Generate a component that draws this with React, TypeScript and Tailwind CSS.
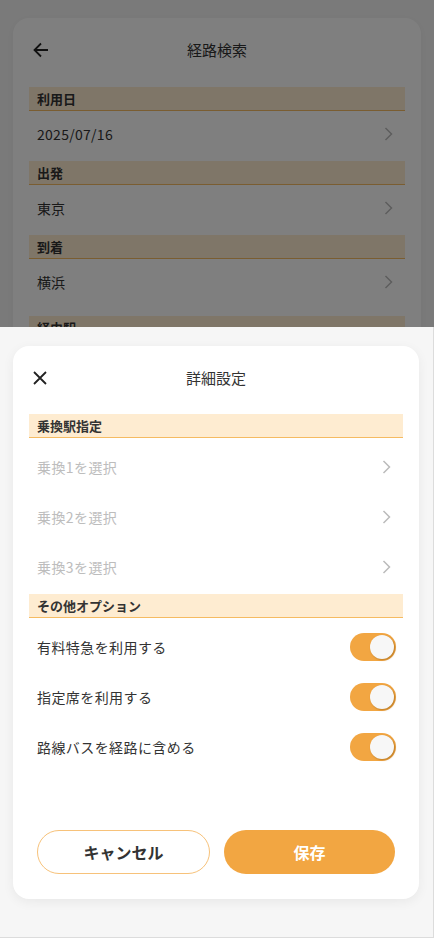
import React from "react";

const font = "font-['Noto_Sans_CJK_JP','Noto_Sans',sans-serif]";

function Chevron({ color = "#bbbbbb" }: { color?: string }) {
  return (
    <svg width="9" height="14" viewBox="0 0 9 14" fill="none">
      <path d="M1.5 1 L7.5 7 L1.5 13" stroke={color} strokeWidth="1.5" />
    </svg>
  );
}

function SectionBar({ label, className = "" }: { label: string; className?: string }) {
  return (
    <div
      className={`h-[24px] bg-[#feecd1] border-b border-[#f5bb62] px-2 flex items-center text-[13px] font-bold text-[#333] ${className}`}
    >
      {label}
    </div>
  );
}

function SelectRow({ text, placeholder }: { text: string; placeholder?: boolean }) {
  return (
    <div className="h-[50px] flex items-center justify-between pl-2 pr-3">
      <span className={`text-[14px] tracking-[0.03em] ${placeholder ? "text-[#bdbdbd]" : "text-[#333]"}`}>
        {text}
      </span>
      <Chevron />
    </div>
  );
}

function ToggleRow({ text }: { text: string }) {
  return (
    <div className="h-[50px] flex items-center justify-between pl-2 pr-[7px]">
      <span className="text-[14px] tracking-[0.03em] text-[#333]">{text}</span>
      <div className="relative w-[46px] h-[28px] rounded-full bg-[#f2a642]">
        <div className="absolute right-[2px] top-[2px] w-6 h-6 rounded-full bg-[#f7f7f7] shadow-[1px_1px_2px_rgba(120,70,0,0.45)]" />
      </div>
    </div>
  );
}

export default function App() {
  return (
    <div className={`relative w-[434px] h-[938px] overflow-hidden bg-[#f5f5f5] ${font}`}>
      {/* page underneath */}
      <div className="px-[13px] pt-[18px]">
        <div className="bg-white rounded-2xl px-4 h-[900px] shadow-[0_2px_10px_rgba(0,0,0,0.05)]">
          <div className="h-16 grid grid-cols-[40px_1fr_40px] items-center">
            <div className="pl-1">
              <svg width="16" height="16" viewBox="0 0 16 16" fill="none">
                <path d="M15 8 H1.5 M8 1.5 L1.5 8 L8 14.5" stroke="#222" strokeWidth="1.8" />
              </svg>
            </div>
            <div className="text-center text-[15px] text-[#333]">経路検索</div>
            <div />
          </div>
          <SectionBar label="利用日" className="mt-[5px]" />
          <div className="h-[46px] mb-1 flex items-center justify-between pl-2 pr-3">
            <span className="text-[14px] tracking-[0.02em] text-[#333]">2025/07/16</span>
            <Chevron />
          </div>
          <SectionBar label="出発" />
          <div className="h-[46px] mb-1 flex items-center justify-between pl-2 pr-3">
            <span className="text-[14px] text-[#333]">東京</span>
            <Chevron />
          </div>
          <SectionBar label="到着" />
          <div className="h-[46px] mb-1 flex items-center justify-between pl-2 pr-3">
            <span className="text-[14px] text-[#333]">横浜</span>
            <Chevron />
          </div>
          <SectionBar label="経由駅" className="mt-[11px]" />
        </div>
      </div>

      <div className="absolute inset-0 bg-black/50" />

      {/* bottom sheet */}
      <div className="absolute left-0 right-0 bottom-0 top-[327px] bg-[#f6f6f6] border-r border-b border-[#dcdcdc] pl-[13px] pr-[14px] pt-[19px]">
        <div className="h-[553px] bg-white rounded-2xl px-4 flex flex-col shadow-[0_3px_12px_rgba(0,0,0,0.06)]">
          <div className="h-16 grid grid-cols-[40px_1fr_40px] items-center">
            <div className="pl-1">
              <svg width="14" height="14" viewBox="0 0 14 14" fill="none">
                <path d="M1 1 L13 13 M13 1 L1 13" stroke="#222" strokeWidth="1.8" />
              </svg>
            </div>
            <div className="text-center text-[15px] text-[#333]">詳細設定</div>
            <div />
          </div>
          <SectionBar label="乗換駅指定" className="mt-1" />
          <div className="mt-1">
            <SelectRow text="乗換1を選択" placeholder />
            <SelectRow text="乗換2を選択" placeholder />
            <SelectRow text="乗換3を選択" placeholder />
          </div>
          <SectionBar label="その他オプション" className="mt-[2px]" />
          <div className="mt-1">
            <ToggleRow text="有料特急を利用する" />
            <ToggleRow text="指定席を利用する" />
            <ToggleRow text="路線バスを経路に含める" />
          </div>
          <div className="mt-auto mb-[25px] px-2 flex gap-[14px]">
            <button className="flex-1 h-[44px] rounded-full border border-[#f7c27a] bg-white text-[16px] font-bold text-[#333]">
              キャンセル
            </button>
            <button className="flex-1 h-[44px] rounded-full bg-[#f2a642] text-[16px] font-bold text-white">
              保存
            </button>
          </div>
        </div>
      </div>
    </div>
  );
}
